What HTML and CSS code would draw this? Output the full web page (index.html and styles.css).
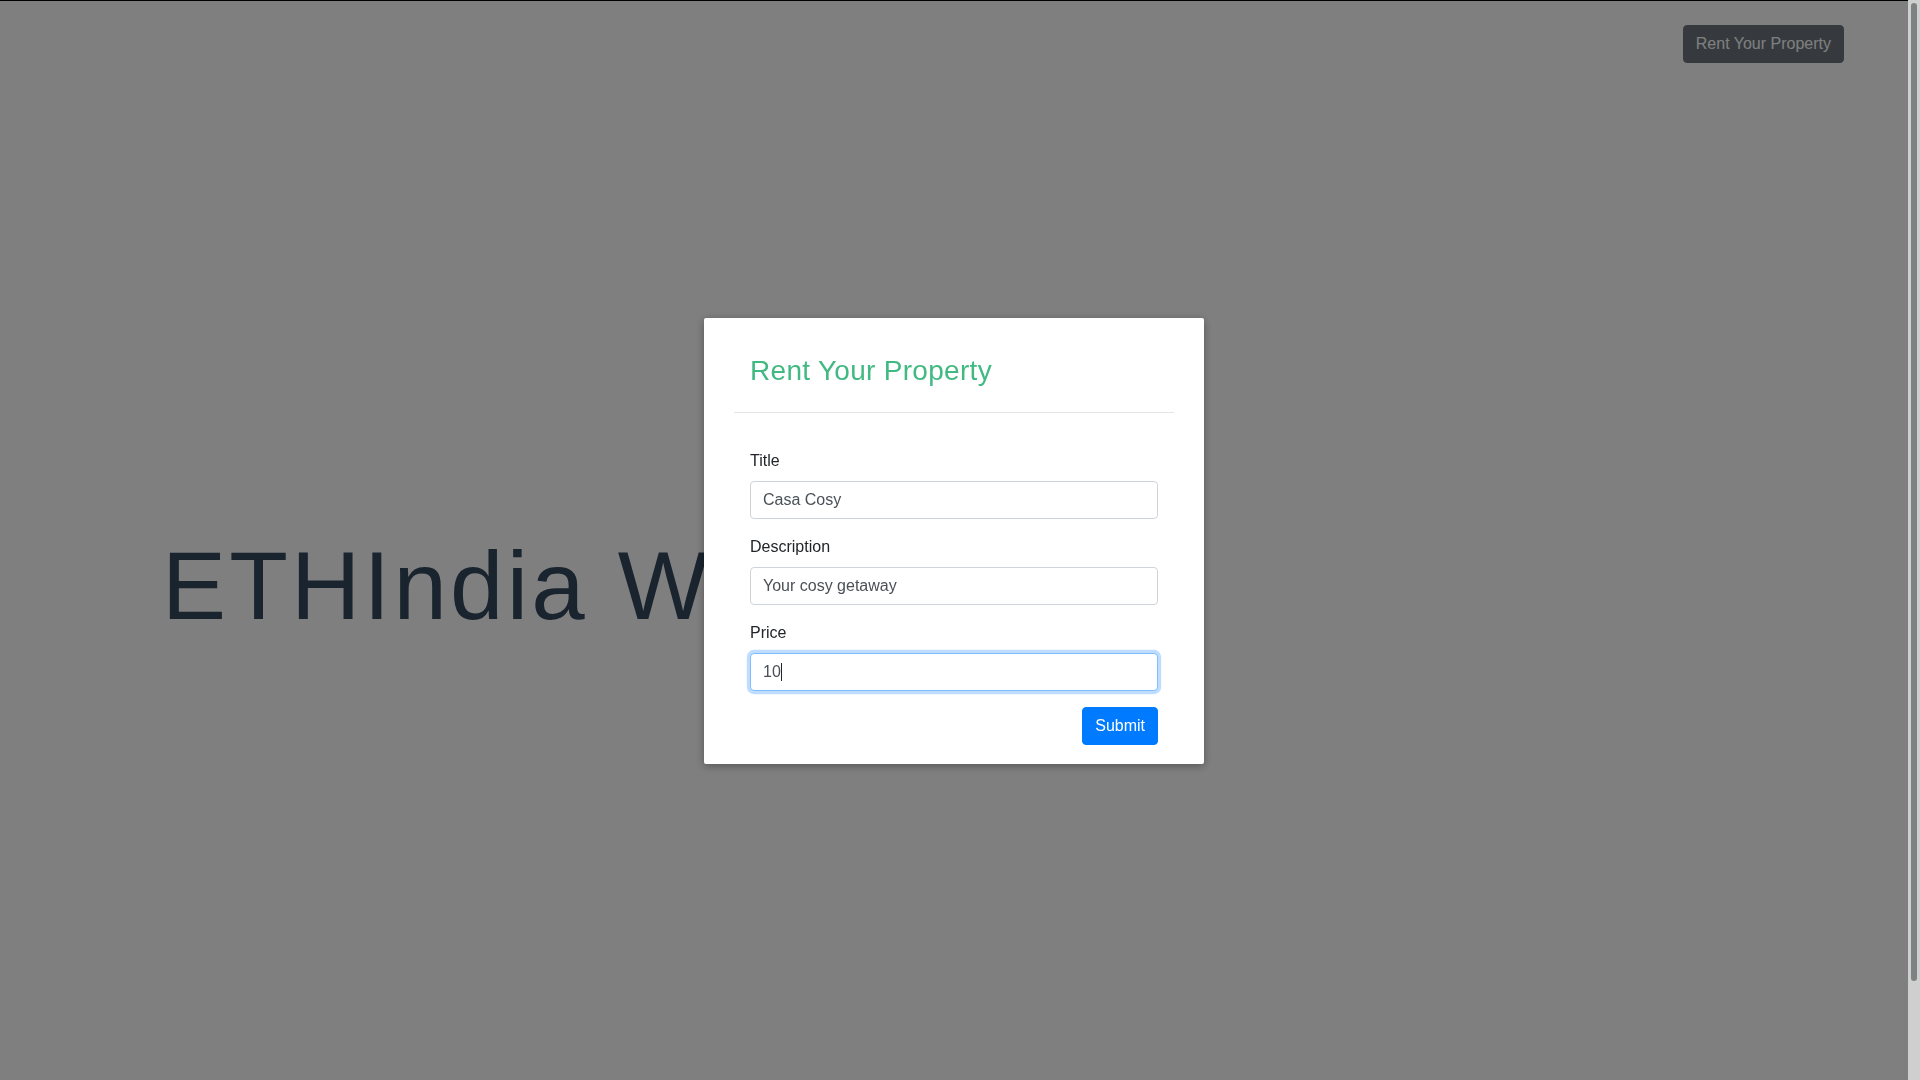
FILE: index.html
```html
<!DOCTYPE html>
<html lang="en">
<head>
<meta charset="utf-8">
<title>ETHIndia</title>
<link rel="stylesheet" href="styles.css">
</head>
<body>
<div class="page">
  <header class="topbar">
    <button class="btn btn-secondary" type="button">Rent Your Property</button>
  </header>
  <section class="hero">
    <h1 class="display">ETHIndia Week</h1>
  </section>
</div>

<div class="overlay">
  <div class="modal">
    <div class="modal-header">
      <h3 class="modal-title">Rent Your Property</h3>
    </div>
    <hr class="divider">
    <form class="modal-form">
      <div class="form-group">
        <label class="form-label" for="title">Title</label>
        <input class="form-control" id="title" type="text" value="Casa Cosy">
      </div>
      <div class="form-group">
        <label class="form-label" for="desc">Description</label>
        <input class="form-control" id="desc" type="text" value="Your cosy getaway">
      </div>
      <div class="form-group">
        <label class="form-label" for="price">Price</label>
        <div class="field-wrap">
          <input class="form-control is-focused" id="price" type="text" value="10">
          <span class="caret"></span>
        </div>
      </div>
      <div class="form-actions">
        <button class="btn btn-primary" type="button">Submit</button>
      </div>
    </form>
  </div>
</div>

<div class="scrollbar"><div class="scrollbar-thumb"></div></div>
</body>
</html>
```
FILE: styles.css
```css
html {
  height: 100%;
}
body {
  margin: 0;
  font-family: "Liberation Sans", Arial, sans-serif;
  font-size: 16px;
  line-height: 1.5;
  color: #212529;
  background: #fff;
  border-top: 1px solid #000;
}

.page {
  min-height: 1169px;
  box-sizing: border-box;
  margin-right: 12px;
}
.topbar {
  display: flex;
  justify-content: flex-end;
  padding: 24px 64px 0 0;
}
.hero {
  padding: 465px 0 0 162px;
}
.display {
  margin: 0;
  font-size: 96px;
  font-weight: 300;
  line-height: 1.2;
  letter-spacing: 3.2px;
  color: #34495e;
  white-space: nowrap;
}

.btn {
  display: inline-block;
  font-family: inherit;
  font-size: 16px;
  line-height: 1.5;
  padding: 6px 12px;
  border: 1px solid transparent;
  border-radius: 4px;
  color: #fff;
  cursor: pointer;
}
.btn-secondary {
  background: #6c757d;
  border-color: #6c757d;
}
.btn-primary {
  background: #007bff;
  border-color: #007bff;
}

.overlay {
  position: fixed;
  top: 0;
  left: 0;
  bottom: 0;
  right: 12px;
  padding-top: 2px;
  box-sizing: border-box;
  background: rgba(0, 0, 0, 0.5);
  display: flex;
  align-items: center;
  justify-content: center;
}
.modal {
  width: 500px;
  box-sizing: border-box;
  background: #fff;
  padding: 30px 30px 19px;
  border-radius: 2px;
  box-shadow: 0 2px 8px rgba(0, 0, 0, 0.33);
}
.modal-header {
  padding: 6px 16px 8px;
}
.modal-title {
  margin: 0;
  font-size: 28px;
  font-weight: 400;
  line-height: 1.2;
  letter-spacing: 0.3px;
  color: #42b983;
}
.divider {
  margin: 16px 0;
  border: 0;
  border-top: 1px solid rgba(0, 0, 0, 0.1);
  height: 0;
}
.modal-form {
  padding: 20px 16px 0;
}
.form-group {
  margin-bottom: 16px;
}
.form-label {
  display: block;
  margin-bottom: 8px;
}
.field-wrap {
  position: relative;
}
.form-control {
  display: block;
  width: 100%;
  box-sizing: border-box;
  height: 38px;
  padding: 6px 12px;
  font-family: inherit;
  font-size: 16px;
  line-height: 1.5;
  color: #495057;
  background: #fff;
  border: 1px solid #ced4da;
  border-radius: 4px;
  outline: none;
}
.form-control.is-focused,
.form-control:focus {
  border-color: #80bdff;
  box-shadow: 0 0 0 3.2px rgba(0, 123, 255, 0.25);
}
.caret {
  position: absolute;
  left: 31px;
  top: 10px;
  width: 1px;
  height: 18px;
  background: #212529;
}
.form-actions {
  display: flex;
  justify-content: flex-end;
}

.scrollbar {
  position: fixed;
  top: 0;
  right: 0;
  width: 12px;
  height: 100%;
  background: #cfcfcf;
}
.scrollbar-thumb {
  position: absolute;
  top: 3px;
  left: 3px;
  width: 6px;
  height: 978px;
  border-radius: 3px;
  background: #7f8283;
}
```
